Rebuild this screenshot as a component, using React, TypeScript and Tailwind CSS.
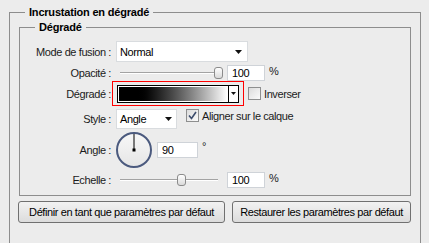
import React from "react";

function Slider({ thumb }: { thumb: number }) {
  return (
    <div className="relative h-full w-[107px]">
      <div className="absolute left-[4px] right-[5px] top-1/2 h-[2px] -translate-y-1/2 border-t border-[#a3a3a3] border-b border-b-white" />
      <div
        className="absolute top-1/2 h-[12px] w-[9px] -translate-y-1/2 rounded-[3px] border border-[#8b8b8b] bg-gradient-to-b from-white to-[#dadada]"
        style={{ left: thumb }}
      />
    </div>
  );
}

function NumberBox({ value, width }: { value: string; width: string }) {
  return (
    <div
      className={`flex h-[16px] items-center border border-[#cfd3d8] bg-white pl-[4px] text-black ${width}`}
    >
      {value}
    </div>
  );
}

function Checkbox({ checked }: { checked?: boolean }) {
  return (
    <div className="flex h-[13px] w-[13px] items-center justify-center border border-[#8e8f8f] bg-gradient-to-br from-[#dcdcdc] to-[#fbfbfb]">
      {checked && (
        <svg width="9" height="9" viewBox="0 0 9 9">
          <path d="M1 4.5 L3.5 7.5 L8 1" stroke="#3c4c6c" strokeWidth="1.6" fill="none" />
        </svg>
      )}
    </div>
  );
}

function Arrow() {
  return (
    <svg width="7" height="4" viewBox="0 0 7 4">
      <path d="M0 0 H7 L3.5 4 Z" fill="#111" />
    </svg>
  );
}

function Row({ label, children, h }: { label: string; children: React.ReactNode; h: string }) {
  return (
    <div className={`flex items-center ${h}`}>
      <div className="w-[91px] shrink-0 text-right">{label}</div>
      {children}
    </div>
  );
}

export default function App() {
  return (
    <div className="h-[243px] w-[429px] overflow-hidden bg-[#ececec] font-['Liberation_Sans',Arial,sans-serif] text-[11px] leading-[14px] tracking-[-0.4px] text-[#1b1b1b]">
      <fieldset className="ml-[9px] mt-[5px] h-[270px] w-[410px] border border-[#8d8d8d] px-[9px]">
        <legend className="ml-[6px] px-[4px] font-bold tracking-[-0.2px] text-black">Incrustation en dégradé</legend>
        <fieldset className="mt-[1px] border border-[#8d8d8d] pb-[7px] pt-[7px]">
          <legend className="ml-[15px] px-[4px] font-bold tracking-[-0.2px] text-black">Dégradé</legend>

          <Row label="Mode de fusion :" h="h-[21px]">
            <div className="ml-[5px] flex h-[21px] w-[132px] items-center justify-between border border-[#d9dcdf] bg-white pl-[3px] pr-[5px] text-black">
              <span>Normal</span>
              <Arrow />
            </div>
          </Row>

          <Row label="Opacité :" h="mt-[3px] h-[16px]">
            <div className="ml-[5px] flex h-full items-center">
              <Slider thumb={98} />
              <div className="ml-[4px]">
                <NumberBox value="100" width="w-[38px]" />
              </div>
              <span className="ml-[4px] self-start leading-[12px]">%</span>
            </div>
          </Row>

          <Row label="Dégradé :" h="h-[25px]">
            <div className="ml-[1px] box-border flex h-[25px] w-[132px] shrink-0 items-center justify-center border border-[#ff0000]">
              <div className="flex h-[18px] w-[122px] border border-black">
                <div className="flex flex-1 border border-white">
                  <div className="flex-1 bg-gradient-to-r from-black from-[15%] to-white" />
                </div>
                <div className="flex w-[10px] items-center justify-center border-l border-black bg-white">
                  <svg width="5" height="3" viewBox="0 0 5 3">
                    <path d="M0 0 H5 L2.5 3 Z" fill="#111" />
                  </svg>
                </div>
              </div>
            </div>
            <div className="ml-[4px] flex items-center">
              <Checkbox />
              <span className="ml-[3px]">Inverser</span>
            </div>
          </Row>

          <Row label="Style :" h="mt-[3px] h-[20px]">
            <div className="ml-[5px] flex h-[20px] w-[61px] items-center justify-between border border-[#d9dcdf] bg-white pl-[3px] pr-[4px] text-black">
              <span>Angle</span>
              <Arrow />
            </div>
            <div className="ml-[9px] flex h-[13px] items-center self-start">
              <Checkbox checked />
              <span className="ml-[3px]">Aligner sur le calque</span>
            </div>
          </Row>

          <Row label="Angle :" h="mt-[3px] h-[36px]">
            <div className="ml-[5px] flex h-[36px] w-[36px] items-start justify-center rounded-full border-2 border-[#4b5a7e] bg-gradient-to-b from-[#f7f7f7] to-[#e6e6e6]">
              <svg width="6" height="18" viewBox="0 0 6 18">
                <line x1="3" y1="0" x2="3" y2="16" stroke="#000" strokeWidth="1" />
                <rect x="1.5" y="14.5" width="3" height="3" fill="#000" />
              </svg>
            </div>
            <div className="ml-[5px]">
              <NumberBox value="90" width="w-[41px]" />
            </div>
            <span className="ml-[4px] -mt-[8px]">°</span>
          </Row>

          <Row label="Echelle :" h="mt-[4px] h-[16px]">
            <div className="ml-[5px] flex h-full items-center">
              <Slider thumb={61} />
              <div className="ml-[4px]">
                <NumberBox value="100" width="w-[38px]" />
              </div>
              <span className="ml-[4px] self-start leading-[12px]">%</span>
            </div>
          </Row>
        </fieldset>

        <div className="-ml-px mt-[5px] flex gap-[7px]">
          <button className="h-[22px] w-[207px] rounded-[3px] border border-[#707070] bg-gradient-to-b from-[#f2f2f2] to-[#dcdcdc] text-black">
            Définir en tant que paramètres par défaut
          </button>
          <button className="h-[22px] w-[179px] rounded-[3px] border border-[#707070] bg-gradient-to-b from-[#f2f2f2] to-[#dcdcdc] text-black">
            Restaurer les paramètres par défaut
          </button>
        </div>
      </fieldset>
    </div>
  );
}
